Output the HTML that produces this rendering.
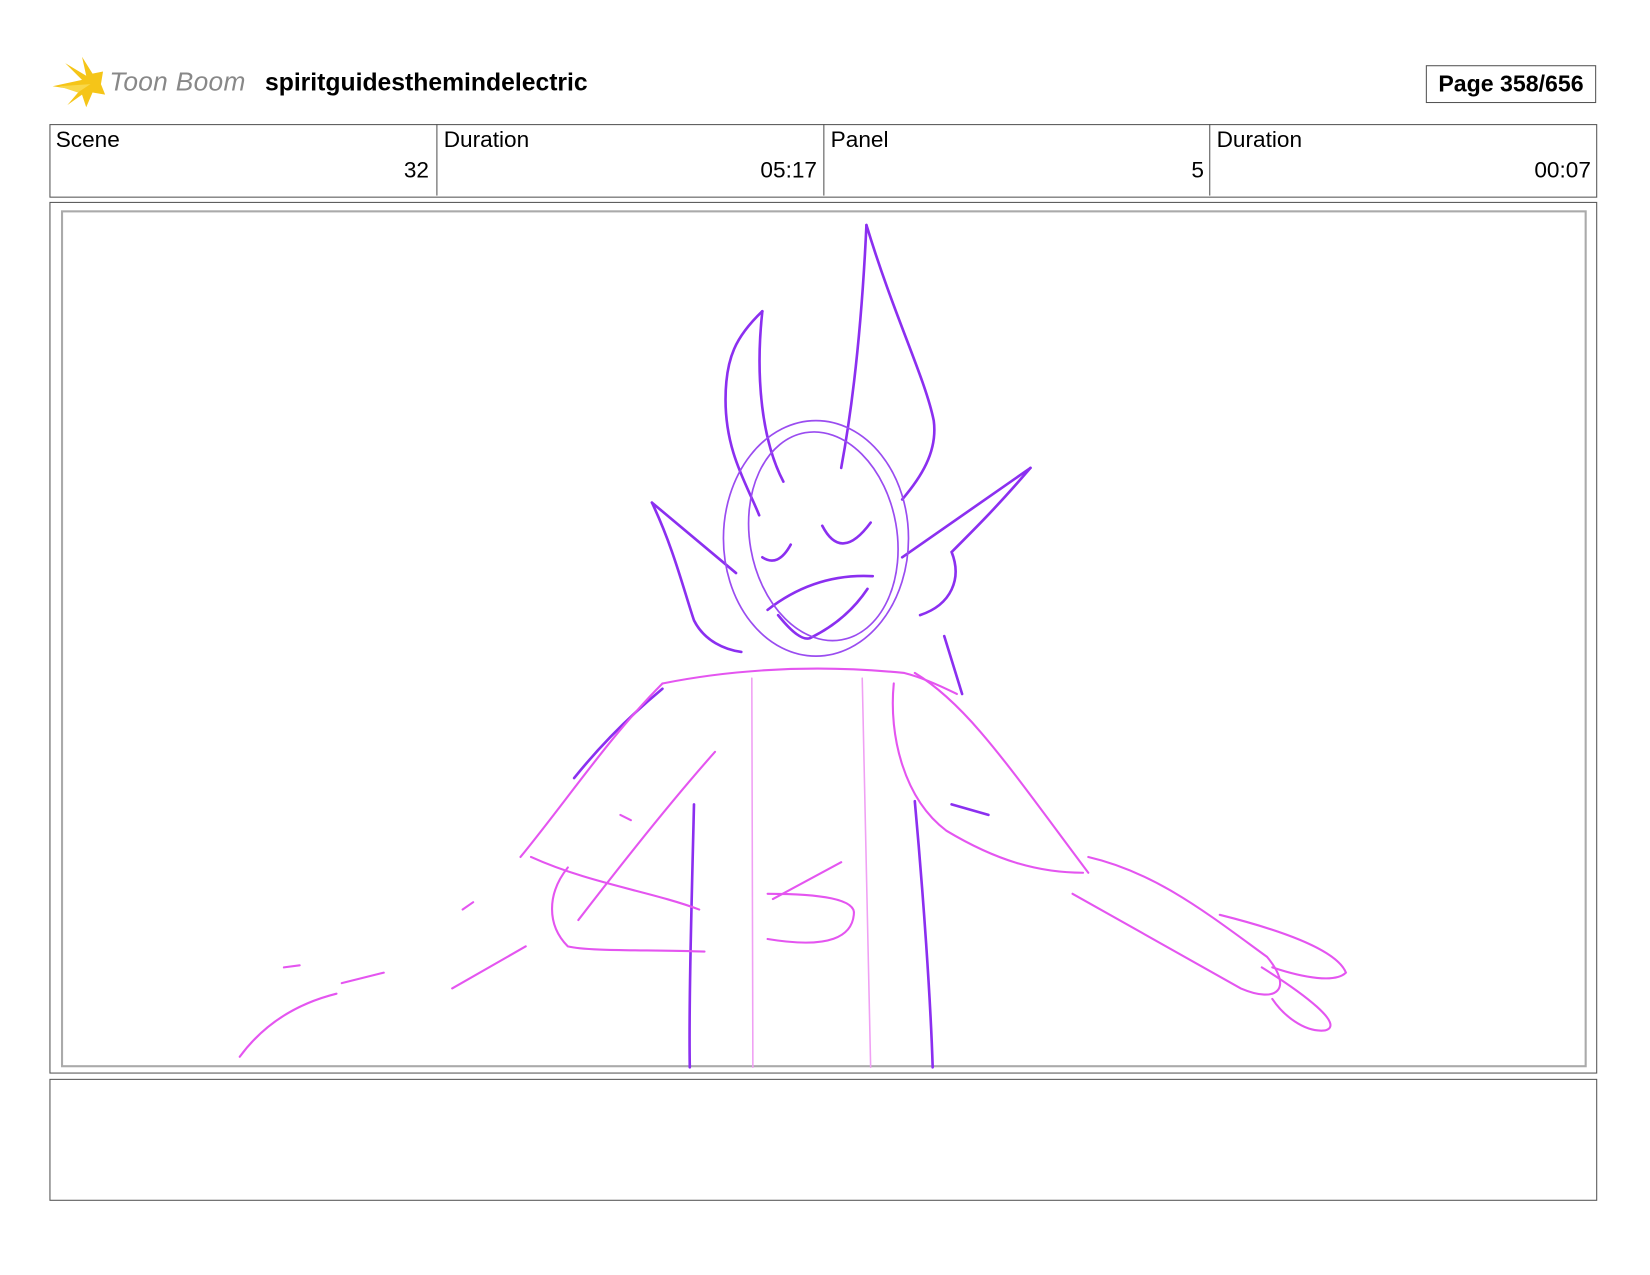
<!DOCTYPE html>
<html><head><meta charset="utf-8"><style>
html,body{margin:0;padding:0;background:#fff;width:1650px;height:1275px;overflow:hidden}
#w{position:absolute;left:0;top:0;width:1560px;height:1206px;transform:scale(1.0515);transform-origin:0 0;font-family:"Liberation Sans",sans-serif;color:#000}
.abs{position:absolute}
.cell{position:absolute;top:118px;height:68px;border-left:1px solid #555;font-size:21.5px}
.cell .l{position:absolute;left:6px;top:3px}
.cell .v{position:absolute;right:6px;top:32px}
</style></head><body><div id="w">
<svg class="abs" style="left:48px;top:54px" width="60" height="52" viewBox="0 0 60 52">
<path d="M2 28 L30 22 L14 6 L34 18 L30 0 L40 16 L50 14 L48 26 L52 36 L40 34 L34 48 L30 36 L16 46 L28 32 Z" fill="#f5c518"/>
<path d="M8 28 L38 26 L26 34 Z" fill="#f9d84a"/>
</svg>
<div class="abs" style="left:104px;top:64px;font-size:25px;font-style:italic;color:#888;letter-spacing:0.3px">Toon Boom</div>
<div class="abs" style="left:252px;top:65px;font-size:23.5px;font-weight:bold">spiritguidesthemindelectric</div>
<div class="abs" style="left:1356px;top:62px;width:160px;height:34px;border:1px solid #555;font-size:22px;font-weight:bold;text-align:center;line-height:34px">Page 358/656</div>
<div class="abs" style="left:47px;top:118px;width:1470px;height:68px;border:1px solid #555"></div>
<div class="cell" style="left:47px;width:367px;border-left:none"><span class="l">Scene</span><span class="v">32</span></div>
<div class="cell" style="left:415px;width:367px"><span class="l">Duration</span><span class="v">05:17</span></div>
<div class="cell" style="left:783px;width:367px"><span class="l">Panel</span><span class="v">5</span></div>
<div class="cell" style="left:1150px;width:368px"><span class="l">Duration</span><span class="v">00:07</span></div>
<div class="abs" style="left:47px;top:192px;width:1470px;height:827px;border:1px solid #555"></div>
<div class="abs" style="left:58px;top:200px;width:1447px;height:811px;border:2px solid #aaa"></div>
<div class="abs" style="left:47px;top:1026px;width:1470px;height:114px;border:1px solid #555"></div>
<svg class="abs" style="left:0;top:0" width="1560" height="1206" fill="none" stroke-linecap="round">
<g stroke="#8b2ff0" stroke-width="2.5">
<path d="M824 214 C820 300 812 380 800 445"/>
<path d="M824 214 C850 300 880 360 888 400 C892 430 875 455 858 475"/>
<path d="M725 296 C700 320 690 340 690 380 C690 430 710 460 722 490"/>
<path d="M725 296 C718 360 725 420 745 458"/>
<path d="M782 500 Q800 535 828 497"/>
<path d="M725 530 Q740 540 752 518"/>
<path d="M730 580 Q775 545 830 548"/>
<path d="M740 585 Q760 610 770 607 Q805 590 825 560"/>
<path d="M620 478 L700 545"/>
<path d="M620 478 C640 520 650 560 660 590 C670 610 690 618 705 620"/>
<path d="M980 445 L858 530"/>
<path d="M980 445 C950 480 930 500 905 525 C915 550 905 575 875 585"/>
<path d="M660 765 C658 850 655 950 656 1015"/>
<path d="M870 762 C878 850 885 950 887 1015"/>
<path d="M898 605 L915 660"/>
<path d="M905 765 L940 775"/>
<path d="M546 740 C570 710 600 680 630 655"/>
</g>
<g stroke="#9a4cf0" stroke-width="1.6">
<ellipse cx="776" cy="512" rx="88" ry="112"/>
<ellipse cx="783" cy="510" rx="70" ry="100" transform="rotate(-10 783 510)"/>
</g>
<g stroke="#e455f0" stroke-width="2">
<path d="M630 650 C680 640 760 630 860 640 C880 645 900 655 910 660"/>
<path d="M630 650 C580 700 540 760 495 815"/>
<path d="M680 715 C640 760 600 810 550 875"/>
<path d="M505 815 C560 840 620 848 665 865"/>
<path d="M540 825 C520 850 520 880 540 900 C560 905 620 903 670 905"/>
<path d="M735 855 L800 820"/>
<path d="M730 850 C780 850 815 855 812 870 C810 890 790 903 730 893"/>
<path d="M850 650 C845 700 860 760 900 790 C950 820 990 830 1030 830"/>
<path d="M870 640 C920 670 960 730 1035 830"/>
<path d="M1035 815 C1100 830 1150 870 1205 910 C1230 940 1215 955 1180 940 L1020 850"/>
<path d="M1160 870 C1200 880 1270 900 1280 925 C1270 935 1240 930 1210 920"/>
<path d="M1200 920 C1240 945 1280 975 1260 980 C1240 982 1220 965 1210 950"/>
<path d="M228 1005 C250 975 280 955 320 945"/>
<path d="M325 935 L365 925 M440 865 L450 858 M430 940 L500 900 M270 920 L285 918 M600 780 L590 775"/>
</g>
<g stroke="#f0a0f4" stroke-width="1.5">
<path d="M715 645 L716 1015"/><path d="M820 645 L828 1015"/>
</g>
</svg>
</div></body></html>
